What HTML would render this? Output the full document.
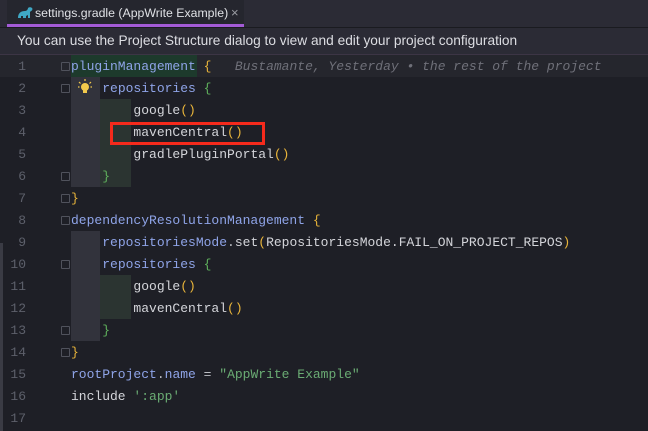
<!DOCTYPE html>
<html><head><style>
body{margin:0;width:648px;height:431px;background:#1e1f26;overflow:hidden;position:relative;font-family:"Liberation Sans",sans-serif}
#tabs{position:absolute;left:0;top:0;width:648px;height:27px;background:#2b2b35;border-bottom:1px solid #1a1b20}
#tab{position:absolute;left:7px;top:0;width:237px;height:27px;background:#25262e;}
#tab .ul{position:absolute;left:0;bottom:0;width:237px;height:3px;background:#a35bd6}
#tab .t{position:absolute;left:28px;top:6px;font-size:12.3px;color:#dfe1e5;white-space:nowrap}
#tab .x{position:absolute;left:224px;top:5px;font-size:13px;color:#9a9ca3}
#banner{position:absolute;left:0;top:28px;width:648px;height:26px;background:#2b2b35;border-bottom:1px solid #3c3545}
#banner span{position:absolute;left:17px;top:5px;font-size:13.7px;color:#dcdde2;white-space:nowrap}
.code{position:absolute;left:0;top:56px;width:648px;font-family:"Liberation Mono",monospace;font-size:13px}
.ln{position:absolute;left:0;width:648px;height:22px;line-height:22px}
.n{position:absolute;left:0;width:26px;text-align:right;color:#5d606b}
.c{position:absolute;left:71px;white-space:pre;color:#bcbec4}
.k{color:#8fa4e8}.y{color:#e8b43a}.g{color:#5fb05c}.s{color:#6aab73}.i{color:#6f7079;font-style:italic}.w{color:#d4d5da}
.blk{position:absolute}
.fold{position:absolute;left:61px;width:9px;height:9px;border:1px solid #50525c;border-radius:1px;box-sizing:border-box}
</style></head><body>
<div id="tabs"><div id="tab">
<svg style="position:absolute;left:10px;top:7px" width="16" height="12" viewBox="0 0 16 12"><path d="M1 11c0-5 3-7 7-7 2 0 3-2 3-3 1-1 3-1 4 0 1 1 0 3-1 3l-1 1v6h-2V8l-2 1v2H6V9H4v2z" fill="#3fa7c4"/></svg>
<span class="t">settings.gradle (AppWrite Example)</span><span class="x">×</span><div class="ul"></div></div></div>
<div id="banner"><span>You can use the Project Structure dialog to view and edit your project configuration</span></div>
<div style="position:absolute;left:0;top:55px;width:648px;height:22px;background:#25262d"></div>
<div style="position:absolute;left:71px;top:55px;width:126px;height:22px;background:#1d3a2c"></div>
<div class="blk" style="left:71px;top:77px;width:29px;height:110px;background:#32333c"></div>
<div class="blk" style="left:100px;top:99px;width:31px;height:88px;background:#2b3431"></div>
<div class="blk" style="left:71px;top:231px;width:29px;height:110px;background:#32333c"></div>
<div class="blk" style="left:100px;top:275px;width:31px;height:44px;background:#2b3431"></div>
<div style="position:absolute;left:0;top:243px;width:3px;height:188px;background:#3a3b44"></div>
<div class="code">
<div class="ln" style="top:0"><span class="n">1</span><span class="c"><span class="k">pluginManagement</span> <span class="y">{</span>   <span class="i">Bustamante, Yesterday • the rest of the project</span></span></div>
<div class="ln" style="top:22px"><span class="n">2</span><span class="c">    <span class="k">repositories</span> <span class="g">{</span></span></div>
<div class="ln" style="top:44px"><span class="n">3</span><span class="c">        <span class="w">google</span><span class="y">()</span></span></div>
<div class="ln" style="top:66px"><span class="n">4</span><span class="c">        <span class="w">mavenCentral</span><span class="y">()</span></span></div>
<div class="ln" style="top:88px"><span class="n">5</span><span class="c">        <span class="w">gradlePluginPortal</span><span class="y">()</span></span></div>
<div class="ln" style="top:110px"><span class="n">6</span><span class="c">    <span class="g">}</span></span></div>
<div class="ln" style="top:132px"><span class="n">7</span><span class="c"><span class="y">}</span></span></div>
<div class="ln" style="top:154px"><span class="n">8</span><span class="c"><span class="k">dependencyResolutionManagement</span> <span class="y">{</span></span></div>
<div class="ln" style="top:176px"><span class="n">9</span><span class="c">    <span class="k">repositoriesMode</span>.<span class="w">set</span><span class="y">(</span><span class="w">RepositoriesMode.FAIL_ON_PROJECT_REPOS</span><span class="y">)</span></span></div>
<div class="ln" style="top:198px"><span class="n">10</span><span class="c">    <span class="k">repositories</span> <span class="g">{</span></span></div>
<div class="ln" style="top:220px"><span class="n">11</span><span class="c">        <span class="w">google</span><span class="y">()</span></span></div>
<div class="ln" style="top:242px"><span class="n">12</span><span class="c">        <span class="w">mavenCentral</span><span class="y">()</span></span></div>
<div class="ln" style="top:264px"><span class="n">13</span><span class="c">    <span class="g">}</span></span></div>
<div class="ln" style="top:286px"><span class="n">14</span><span class="c"><span class="y">}</span></span></div>
<div class="ln" style="top:308px"><span class="n">15</span><span class="c"><span class="k">rootProject</span>.<span class="k">name</span> = <span class="s">"AppWrite Example"</span></span></div>
<div class="ln" style="top:330px"><span class="n">16</span><span class="c"><span class="w">include</span> <span class="s">':app'</span></span></div>
<div class="ln" style="top:352px"><span class="n">17</span></div>
</div>
<div class="fold" style="top:62px"></div><div class="fold" style="top:84px"></div>
<div class="fold" style="top:172px"></div><div class="fold" style="top:194px"></div>
<div class="fold" style="top:216px"></div><div class="fold" style="top:260px"></div>
<div class="fold" style="top:326px"></div><div class="fold" style="top:348px"></div>
<svg style="position:absolute;left:78px;top:79px" width="14" height="16" viewBox="0 0 14 16"><circle cx="7" cy="8" r="4" fill="#f2c94c"/><rect x="5" y="11" width="4" height="3" fill="#f2c94c"/><path d="M7 0v2M1 3l1.5 1.5M13 3l-1.5 1.5M0 8h1.5M12.5 8H14" stroke="#f2c94c" stroke-width="1.2"/></svg>
<div style="position:absolute;left:110px;top:122px;width:155px;height:23px;border:3px solid #f52a1c;box-sizing:border-box"></div>
</body></html>
